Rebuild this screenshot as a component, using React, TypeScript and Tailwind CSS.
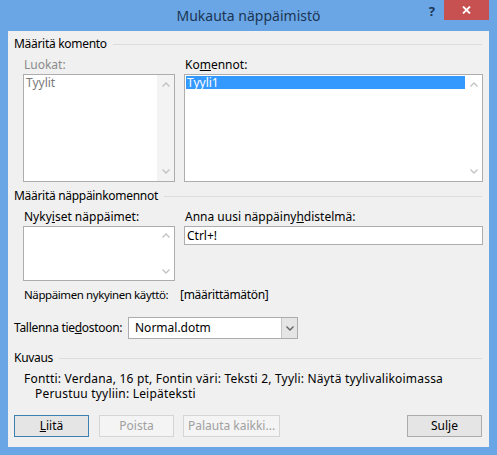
import React from "react";

const Up = ({ color = "#c2c2c2" }: { color?: string }) => (
  <svg width="8" height="5" viewBox="0 0 8 5">
    <path d="M0.5 4.5 L4 1 L7.5 4.5" fill="none" stroke={color} strokeWidth="1.3" />
  </svg>
);
const Down = ({ color = "#c2c2c2" }: { color?: string }) => (
  <svg width="8" height="5" viewBox="0 0 8 5">
    <path d="M0.5 0.5 L4 4 L7.5 0.5" fill="none" stroke={color} strokeWidth="1.3" />
  </svg>
);

const GroupHeader = ({ text, className = "" }: { text: string; className?: string }) => (
  <div className={"flex items-center h-[14px] leading-[14px] whitespace-nowrap " + className}>
    <span className="tracking-[-0.3px]">{text}</span>
    <div className="flex-1 h-px bg-[#dcdcdc] ml-[6px] mr-[1px]" />
  </div>
);

const ScrollTrack = ({ bg }: { bg: string }) => (
  <div className={"w-[17px] flex flex-col items-center justify-between py-[7px] " + bg}>
    <Up />
    <Down />
  </div>
);

export default function App() {
  return (
    <div
      className="w-[497px] h-[455px] bg-[#6aa6e6] flex flex-col text-[12px] text-[#000] whitespace-nowrap"
      style={{ fontFamily: '"Noto Sans", "Open Sans", Arial, sans-serif' }}
    >
      {/* Title bar */}
      <div className="relative h-[31px] flex items-center justify-center">
        <span className="text-[14px] text-[#1b3553] pb-[1px]">Mukauta näppäimistö</span>
        <span className="absolute right-[62px] top-[2px] text-[13px] font-bold text-[#1b3553]">?</span>
        <div className="absolute right-[8px] top-0 w-[45px] h-[20px] bg-[#c75050] flex items-center justify-center">
          <svg width="9" height="8" viewBox="0 0 9 8">
            <path d="M1 0.5 L8 7.5 M8 0.5 L1 7.5" stroke="#ffffff" strokeWidth="1.8" />
          </svg>
        </div>
      </div>

      {/* Panel */}
      <div className="mx-[8px] mb-[8px] flex-1 bg-[#f0f0f0] flex flex-col pl-[6px] pr-[6px]">
        <GroupHeader text="Määritä komento" className="mt-[6px]" />

        <div className="flex gap-[9px] ml-[9px] mt-[7px]">
          <div className="w-[152px] flex flex-col">
            <div className="h-[14px] leading-[14px] pl-[1px] text-[#8a8a8a]">Luokat:</div>
            <div className="mt-[2px] h-[108px] border border-[#adadad] bg-white flex">
              <div className="flex-1 pl-[2px] pt-[1px] leading-[14px] text-[#7a7a7a]">Tyylit</div>
              <ScrollTrack bg="bg-[#f3f3f3]" />
            </div>
          </div>
          <div className="w-[299px] flex flex-col">
            <div className="h-[14px] leading-[14px] pl-[1px]">
              Ko<u>m</u>ennot:
            </div>
            <div className="mt-[2px] h-[108px] border border-[#adadad] bg-white flex">
              <div className="flex-1 pl-[1px] pt-[1px]">
                <div className="h-[13px] leading-[13px] bg-[#3399ff] text-white pl-[1px]">Tyyli1</div>
              </div>
              <ScrollTrack bg="bg-white" />
            </div>
          </div>
        </div>

        <GroupHeader text="Määritä näppäinkomennot" className="mt-[7px]" />

        <div className="flex gap-[9px] ml-[9px] mt-[7px]">
          <div className="w-[152px] flex flex-col">
            <div className="h-[14px] leading-[14px] pl-[1px]">
              Nyky<u>i</u>set näppäimet:
            </div>
            <div className="mt-[2px] h-[55px] border border-[#adadad] bg-white flex">
              <div className="flex-1" />
              <div className="w-[17px] flex flex-col items-center justify-between py-[6px] bg-white">
                <Up />
                <Down />
              </div>
            </div>
          </div>
          <div className="w-[299px] flex flex-col">
            <div className="h-[14px] leading-[14px] pl-[1px]">
              Anna uusi näppäiny<u>h</u>distelmä:
            </div>
            <div className="mt-[2px] h-[19px] border border-[#adadad] bg-white leading-[17px] pl-[2px]">
              Ctrl+!
            </div>
          </div>
        </div>

        <div className="flex ml-[10px] mt-[7px] h-[14px] leading-[14px]">
          <span className="w-[156px] shrink-0 text-[11.5px] tracking-[-0.4px]">Näppäimen nykyinen käyttö:</span>
          <span className="tracking-[-0.3px]">[määrittämätön]</span>
        </div>

        <div className="flex items-center mt-[15px] h-[22px]">
          <span className="w-[114px] shrink-0 tracking-[-0.3px]">
            Tallenna tie<u>d</u>ostoon:
          </span>
          <div className="w-[170px] h-[22px] border border-[#acacac] bg-white flex">
            <div className="flex-1 pl-[6px] leading-[20px]">Normal.dotm</div>
            <div className="w-[16px] bg-[#e5e5e5] border-l border-[#c4c4c4] flex items-center justify-center">
              <Down color="#606060" />
            </div>
          </div>
        </div>

        <GroupHeader text="Kuvaus" className="mt-[12px]" />

        <div className="ml-[10px] mt-[6px] h-[15px] leading-[15px] tracking-[0.2px]">
          Fontti: Verdana, 16 pt, Fontin väri: Teksti 2, Tyyli: Näytä tyylivalikoimassa
        </div>
        <div className="ml-[21px] h-[15px] leading-[15px] tracking-[0.2px]">Perustuu tyyliin: Leipäteksti</div>

        <div className="flex mt-[14px] h-[22px]">
          <button className="w-[75px] h-[22px] border border-[#3c7fb1] bg-[#e5e5e5] leading-[20px]">
            <u>L</u>iitä
          </button>
          <button className="ml-[10px] w-[75px] h-[22px] border border-[#d5d5d5] bg-[#f4f4f4] text-[#a0a0a0] leading-[20px]">
            Poista
          </button>
          <button className="ml-[9px] w-[97px] h-[22px] border border-[#d5d5d5] bg-[#f4f4f4] text-[#a0a0a0] leading-[20px]">
            Palauta kaikki...
          </button>
          <div className="flex-1" />
          <button className="w-[75px] h-[22px] border border-[#acacac] bg-[#e5e5e5] leading-[20px] mr-[1px]">
            Sulje
          </button>
        </div>
      </div>
    </div>
  );
}
